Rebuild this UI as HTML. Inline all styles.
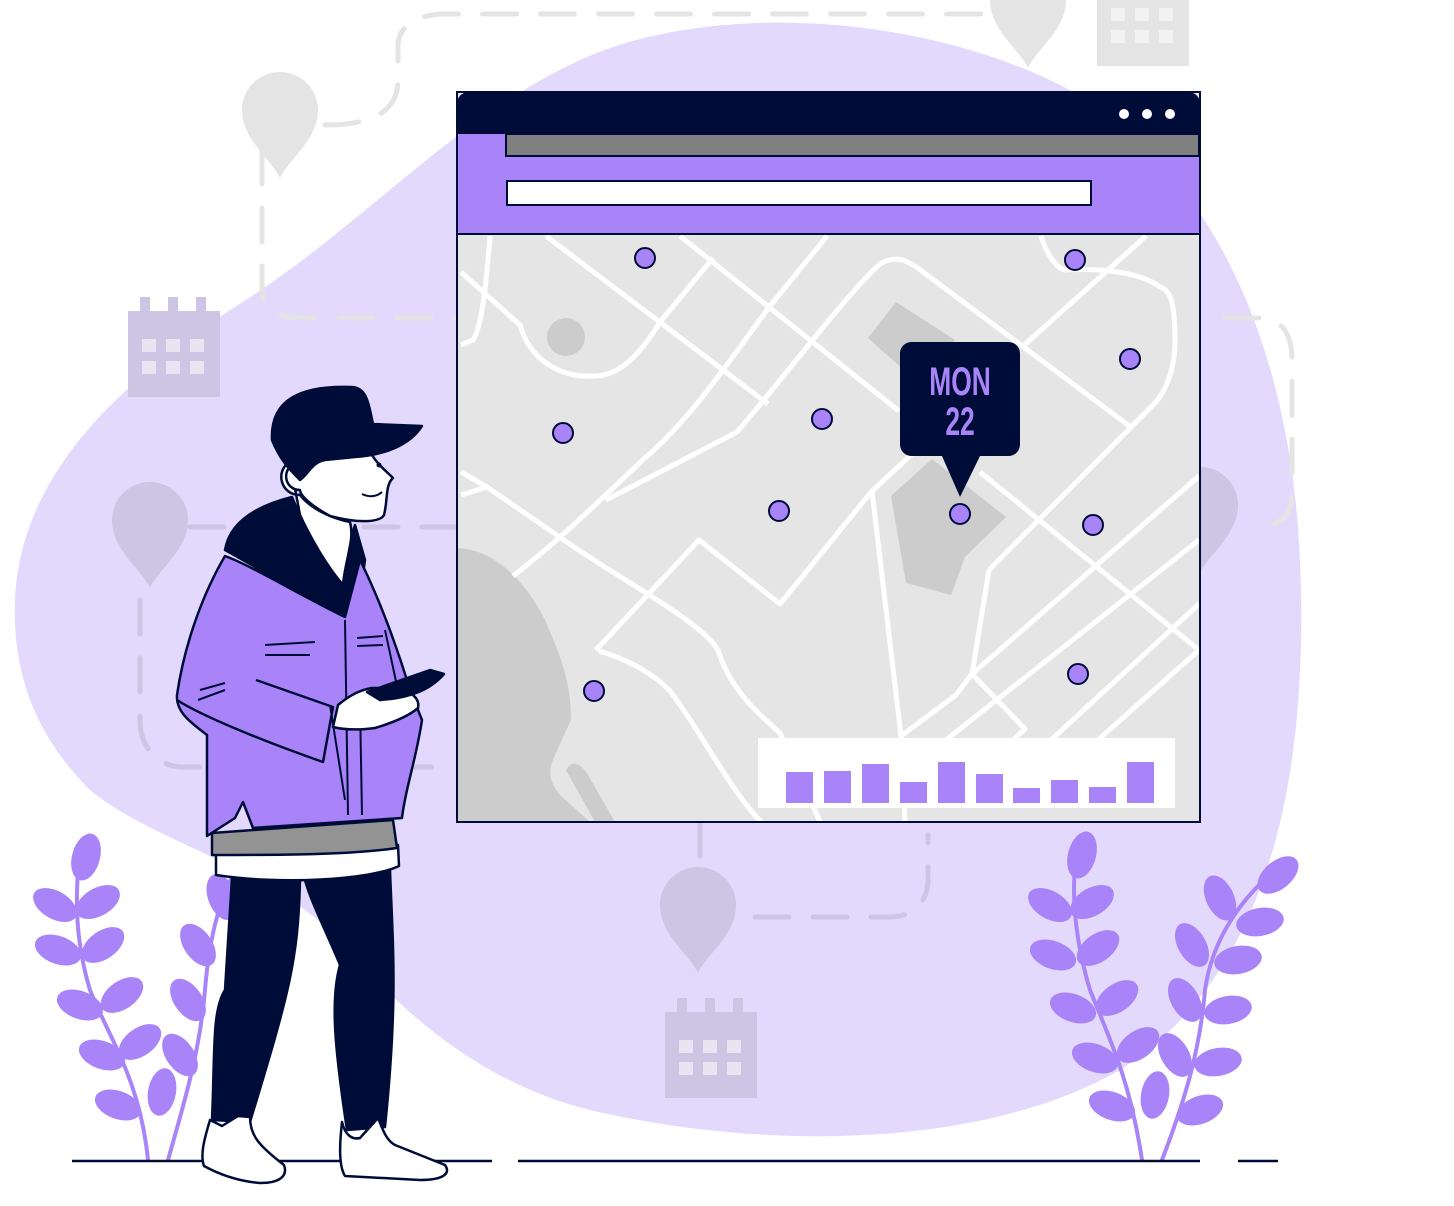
<!DOCTYPE html>
<html><head><meta charset="utf-8"><style>html,body{margin:0;padding:0;background:#fff}svg{display:block}</style></head><body>
<svg width="1454" height="1206" viewBox="0 0 1454 1206" xmlns="http://www.w3.org/2000/svg">
<defs>
<g id="pin"><path d="M0,68 C-8,50 -38,30 -38,0 C-38,-22 -20,-38 0,-38 C20,-38 38,-22 38,0 C38,30 8,50 0,68 Z"/></g>
<g id="cal"><path d="M0,14 H92 V100 H0 Z M12,0 h10 v16 h-10 Z M40,0 h10 v16 h-10 Z M68,0 h10 v16 h-10 Z" /><g fill="#fff" opacity="0.55"><rect x="14" y="42" width="14" height="13"/><rect x="38" y="42" width="14" height="13"/><rect x="62" y="42" width="14" height="13"/><rect x="14" y="64" width="14" height="13"/><rect x="38" y="64" width="14" height="13"/><rect x="62" y="64" width="14" height="13"/></g></g>
</defs>
<path d="M15,600 C20,480 110,390 230,310 C360,230 450,120 580,60 C700,5 900,10 1050,80 C1200,150 1290,330 1300,560 C1310,800 1260,980 1120,1070 C980,1150 760,1150 590,1110 C470,1080 390,1000 330,930 C250,860 150,840 90,790 C40,740 12,680 15,600 Z" fill="#e3d9fc"/>
<g fill="none" stroke="#e4e4e4" stroke-width="5" stroke-dasharray="34 24" stroke-linecap="round">
<path d="M262,150 V290 C262,310 280,318 300,318 H460"/>
<path d="M325,125 C375,125 398,110 398,80 V45 C398,25 420,14 445,14 H1030"/>
<path d="M1225,318 H1260 C1282,318 1292,335 1292,360 V495 C1292,515 1280,527 1255,527"/>
</g>
<g fill="none" stroke="#cec4e4" stroke-width="5" stroke-dasharray="34 24" stroke-linecap="round">
<path d="M190,527 H460"/>
<path d="M140,600 V720 C140,745 155,765 180,767 H435"/>
<path d="M700,822 V860"/>
<path d="M755,917 H890 C915,917 928,900 928,880 V835"/>
</g>
<g fill="#e4e4e4"><use href="#pin" x="280" y="110"/><use href="#pin" x="1028" y="0"/><use href="#cal" x="1097" y="-34"/></g>
<g fill="#cec4e4"><use href="#pin" x="150" y="520"/><use href="#pin" x="1200" y="505"/><use href="#pin" x="698" y="905"/><use href="#cal" x="128" y="297"/><use href="#cal" x="665" y="998"/></g>
<rect x="457" y="92" width="743" height="730" fill="#e5e5e5" stroke="#000c38" stroke-width="2"/>
<clipPath id="mc"><rect x="458" y="234" width="741" height="587"/></clipPath>
<g clip-path="url(#mc)">
<circle cx="566" cy="337" r="19" fill="#cccccc"/>
<path d="M896,302 L955,340 L915,380 L868,338 Z" fill="#cccccc"/>
<path d="M891,496 L932,459 L1006,517 L965,557 L951,595 L906,583 Z" fill="#cccccc"/>
<path d="M458,548 C500,550 530,590 545,620 C560,655 571,680 571,720 L555,755 C548,770 548,780 560,795 L590,822 L458,822 Z" fill="#cccccc"/>
<path d="M566,770 C572,760 580,762 588,775 L615,822 L595,822 Z" fill="#cccccc"/>
<g fill="none" stroke="#fff" stroke-width="5" stroke-linejoin="round">
<path d="M461,272 L520,325 C530,360 560,378 594,376 C625,376 645,345 661,321 L713,258"/>
<path d="M490,236 C485,300 480,330 473,340 L461,345"/>
<path d="M546,236 L768,404"/>
<path d="M680,236 L899,411"/>
<path d="M980,472 L1199,650"/>
<path d="M827,236 L770,306 C730,360 690,420 646,457 C600,500 560,540 513,576"/>
<path d="M461,472 L487,487 L561,538 C620,580 700,620 718,650 C730,690 760,715 780,733 L820,822"/>
<path d="M461,495 L487,487"/>
<path d="M606,500 L737,432 C790,370 850,290 880,264 C895,255 905,260 915,266 L1132,428"/>
<path d="M596,650 L699,540 L780,604 L872,491 L913,453"/>
<path d="M599,651 C630,660 655,675 670,691 C700,730 730,790 761,822"/>
<path d="M872,491 L901,736 L905,822"/>
<path d="M989,570 L972,674 L956,695 L901,736 M989,570 L1156,402 C1170,385 1175,360 1175,343 C1175,300 1170,290 1160,287 C1140,272 1100,268 1065,270 C1055,268 1045,250 1041,236"/>
<path d="M1022,347 L1146,236"/>
<path d="M972,674 L1025,729 L1013,740"/>
<path d="M1199,476 L972,674"/>
<path d="M1199,540 L946,740"/>
<path d="M1199,604 L1051,740"/>
<path d="M1199,650 L1098,740"/>
</g>
<g fill="#a984f8" stroke="#000c38" stroke-width="2">
<circle cx="645" cy="258" r="10"/><circle cx="1075" cy="260" r="10"/><circle cx="1130" cy="359" r="10"/><circle cx="563" cy="433" r="10"/><circle cx="822" cy="419" r="10"/><circle cx="779" cy="511" r="10"/><circle cx="960" cy="514" r="10"/><circle cx="1093" cy="525" r="10"/><circle cx="594" cy="691" r="10"/><circle cx="1078" cy="674" r="10"/>
</g>
<rect x="758" y="738" width="417" height="70" fill="#fff"/>
<g fill="#a984f8">
<rect x="786" y="772" width="27" height="31"/><rect x="824" y="771" width="27" height="32"/><rect x="862" y="764" width="27" height="39"/><rect x="900" y="782" width="27" height="21"/><rect x="938" y="762" width="27" height="41"/><rect x="976" y="774" width="27" height="29"/><rect x="1013" y="788" width="27" height="15"/><rect x="1051" y="780" width="27" height="23"/><rect x="1089" y="787" width="27" height="16"/><rect x="1127" y="762" width="27" height="41"/>
</g>
</g>
<path d="M457,134 V104 C457,97 462,92 469,92 H1188 C1195,92 1200,97 1200,104 V134 Z" fill="#000c38"/>
<rect x="458" y="134" width="741" height="99" fill="#a984f8"/>
<line x1="457" y1="234" x2="1200" y2="234" stroke="#000c38" stroke-width="2"/>
<rect x="506" y="134" width="693" height="22" fill="#808080" stroke="#000c38" stroke-width="2"/>
<rect x="507" y="181" width="584" height="24" fill="#fff" stroke="#000c38" stroke-width="2"/>
<g fill="#fff"><circle cx="1124" cy="114" r="5"/><circle cx="1147" cy="114" r="5"/><circle cx="1170" cy="114" r="5"/></g>
<path d="M912,342 H1008 C1015,342 1020,347 1020,354 V444 C1020,451 1015,456 1008,456 H980 L960,497 L942,456 H912 C905,456 900,451 900,444 V354 C900,347 905,342 912,342 Z" fill="#000c38"/>
<g fill="#a984f8" font-family="Liberation Sans Narrow, Liberation Sans, sans-serif" font-weight="bold" text-anchor="middle">
<text x="0" y="0" font-size="40" transform="translate(960,395) scale(0.66,1)">MON</text>
<text x="0" y="0" font-size="40" transform="translate(960,435) scale(0.66,1)">22</text>
</g>
<g fill="none" stroke="#a984f8" stroke-width="4" stroke-linecap="round">
<path d="M148,1160 C140,1080 110,1040 90,990 C75,940 76,900 78,870"/>
<path d="M168,1160 C185,1100 200,1050 205,990 C210,930 220,900 240,860"/>
<path d="M1142,1160 C1130,1080 1110,1040 1090,990 C1075,940 1072,900 1075,865"/>
<path d="M1162,1160 C1185,1100 1200,1050 1205,990 C1212,940 1240,900 1275,870"/>
</g>
<g fill="#a984f8">
<ellipse cx="86" cy="857" rx="14" ry="24" transform="rotate(15 86 857)"/>
<ellipse cx="55" cy="905" rx="24" ry="14" transform="rotate(30 55 905)"/><ellipse cx="98" cy="902" rx="24" ry="14" transform="rotate(-30 98 902)"/>
<ellipse cx="58" cy="950" rx="24" ry="14" transform="rotate(20 58 950)"/><ellipse cx="103" cy="945" rx="24" ry="14" transform="rotate(-35 103 945)"/>
<ellipse cx="80" cy="1005" rx="24" ry="14" transform="rotate(20 80 1005)"/><ellipse cx="122" cy="995" rx="24" ry="14" transform="rotate(-35 122 995)"/>
<ellipse cx="102" cy="1055" rx="24" ry="14" transform="rotate(20 102 1055)"/><ellipse cx="140" cy="1042" rx="24" ry="14" transform="rotate(-35 140 1042)"/>
<ellipse cx="118" cy="1105" rx="24" ry="14" transform="rotate(20 118 1105)"/><ellipse cx="162" cy="1092" rx="14" ry="24" transform="rotate(10 162 1092)"/>
<ellipse cx="222" cy="897" rx="14" ry="24" transform="rotate(-20 222 897)"/>
<ellipse cx="198" cy="945" rx="14" ry="24" transform="rotate(-35 198 945)"/>
<ellipse cx="188" cy="1000" rx="14" ry="24" transform="rotate(-35 188 1000)"/>
<ellipse cx="180" cy="1055" rx="14" ry="24" transform="rotate(-35 180 1055)"/>
<ellipse cx="1082" cy="855" rx="14" ry="24" transform="rotate(15 1082 855)"/>
<ellipse cx="1050" cy="905" rx="24" ry="14" transform="rotate(30 1050 905)"/><ellipse cx="1092" cy="902" rx="24" ry="14" transform="rotate(-30 1092 902)"/>
<ellipse cx="1053" cy="955" rx="24" ry="14" transform="rotate(20 1053 955)"/><ellipse cx="1098" cy="948" rx="24" ry="14" transform="rotate(-35 1098 948)"/>
<ellipse cx="1073" cy="1008" rx="24" ry="14" transform="rotate(20 1073 1008)"/><ellipse cx="1117" cy="998" rx="24" ry="14" transform="rotate(-35 1117 998)"/>
<ellipse cx="1095" cy="1058" rx="24" ry="14" transform="rotate(20 1095 1058)"/><ellipse cx="1138" cy="1045" rx="24" ry="14" transform="rotate(-35 1138 1045)"/>
<ellipse cx="1112" cy="1106" rx="24" ry="14" transform="rotate(20 1112 1106)"/><ellipse cx="1155" cy="1095" rx="14" ry="24" transform="rotate(10 1155 1095)"/>
<ellipse cx="1278" cy="875" rx="24" ry="14" transform="rotate(-40 1278 875)"/>
<ellipse cx="1220" cy="898" rx="14" ry="24" transform="rotate(-25 1220 898)"/><ellipse cx="1260" cy="922" rx="24" ry="14" transform="rotate(-10 1260 922)"/>
<ellipse cx="1192" cy="945" rx="14" ry="24" transform="rotate(-30 1192 945)"/><ellipse cx="1238" cy="960" rx="24" ry="14" transform="rotate(-10 1238 960)"/>
<ellipse cx="1185" cy="1000" rx="14" ry="24" transform="rotate(-30 1185 1000)"/><ellipse cx="1228" cy="1010" rx="24" ry="14" transform="rotate(-10 1228 1010)"/>
<ellipse cx="1175" cy="1055" rx="14" ry="24" transform="rotate(-30 1175 1055)"/><ellipse cx="1218" cy="1062" rx="24" ry="14" transform="rotate(-10 1218 1062)"/>
<ellipse cx="1200" cy="1110" rx="24" ry="14" transform="rotate(-20 1200 1110)"/>
</g>
<g stroke="#000c38" stroke-width="2.5"><line x1="72" y1="1161" x2="492" y2="1161"/><line x1="518" y1="1161" x2="1200" y2="1161"/><line x1="1238" y1="1161" x2="1278" y2="1161"/></g>
<g stroke="#000c38" stroke-width="2.5" stroke-linejoin="round">
<path d="M232,878 L300,880 C298,960 290,990 250,1122 L212,1120 C215,1050 212,1010 225,990 Z" fill="#000c38"/>
<path d="M305,880 L390,870 C393,950 398,1000 385,1127 L347,1130 C335,1050 330,1000 340,965 C330,940 310,900 305,880 Z" fill="#000c38"/>
<path d="M210,1120 L222,1126 L238,1116 L250,1117 C250,1135 258,1145 284,1165 C288,1176 280,1183 260,1183 C235,1181 215,1172 204,1166 C200,1155 204,1140 210,1120 Z" fill="#fff"/>
<path d="M342,1122 C345,1135 352,1140 360,1138 L378,1118 C383,1130 386,1140 395,1145 L445,1165 C452,1175 440,1180 420,1180 L345,1176 C338,1165 340,1140 342,1122 Z" fill="#fff"/>
<path d="M216,848 L398,845 L399,866 C370,880 280,885 216,875 Z" fill="#fff"/>
<path d="M212,833 L393,820 L397,848 C350,855 280,855 212,855 Z" fill="#939393"/>
<path d="M290,462 C275,470 280,495 300,495 C310,508 330,518 350,522 C355,540 345,560 343,585 C330,570 310,540 300,515 Z" fill="#fff"/>
<path d="M225,550 C230,520 260,505 292,497 C310,540 330,570 343,585 C348,560 350,540 355,525 L365,560 C362,585 355,605 345,617 C320,608 280,580 225,550 Z" fill="#000c38"/>
<path d="M225,556 C250,565 300,595 345,617 L360,560 C380,600 398,650 410,690 L422,720 C416,760 405,790 402,818 L253,828 L243,802 L235,818 L207,836 L207,735 C190,722 176,712 177,695 C185,640 205,590 225,556 Z" fill="#a984f8"/>
<path d="M177,700 C200,715 260,740 323,762 L333,707 L256,680" fill="#a984f8"/>
<path d="M345,620 L348,815 M330,705 L345,800 M360,705 L362,815 M385,630 L400,700 M265,645 L315,642 M265,655 L310,655 M357,638 L383,636 M357,646 L383,645 M200,690 L225,683 M198,700 L225,690" fill="none" stroke-width="2"/>
<path d="M338,705 C350,695 360,690 372,688 L405,688 C412,695 420,698 418,708 C410,715 395,722 375,728 C360,730 345,730 333,727 Z" fill="#fff"/>
<path d="M367,692 L430,670 L444,674 C430,690 410,698 380,700 Z" fill="#000c38"/>
<path d="M296,462 L372,455 C378,465 385,470 393,478 C385,485 388,500 384,515 C380,522 360,524 330,516 C310,505 300,495 300,490 C285,490 280,470 296,462 Z" fill="#fff"/>
<path d="M272,440 C270,400 300,385 352,387 C366,388 368,400 373,424 L422,426 C410,445 385,455 355,457 L325,460 C312,462 308,475 300,480 C290,470 280,460 272,440 Z" fill="#000c38"/>
<path d="M362,494 C370,498 378,496 382,492" fill="none" stroke-width="2"/>
</g>
<circle cx="379" cy="465" r="2.5" fill="#000c38"/>
</svg>
</body></html>
